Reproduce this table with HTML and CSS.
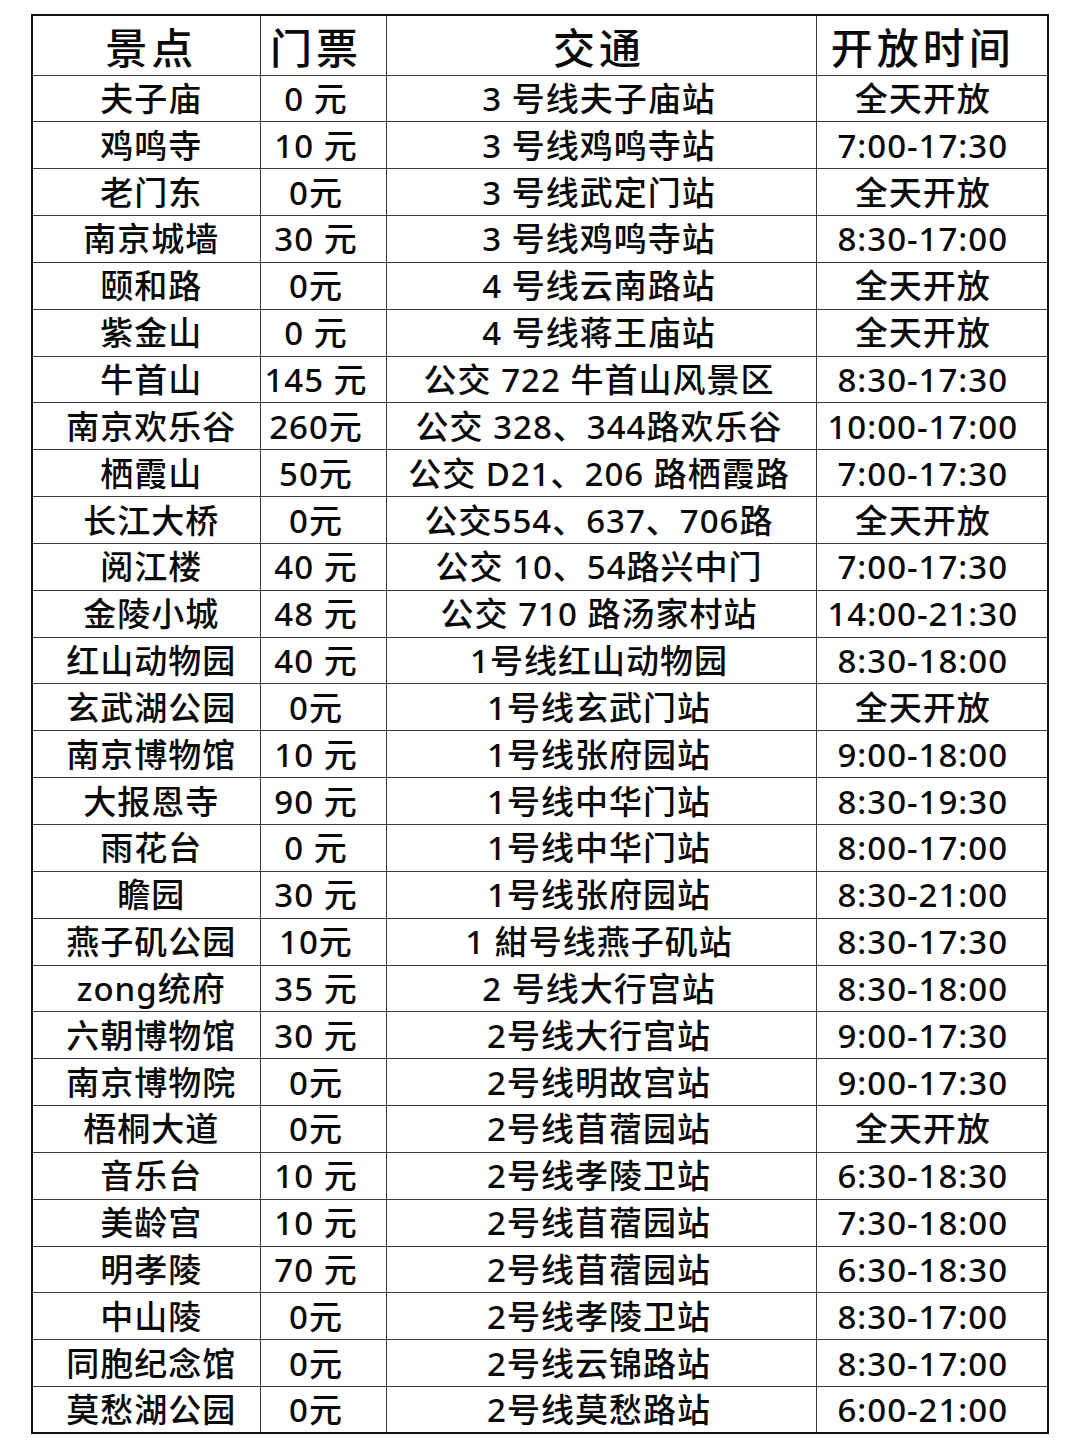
FILE: index.html
```html
<!DOCTYPE html>
<html lang="zh-CN">
<head>
<meta charset="utf-8">
<title>南京景点</title>
<link rel="stylesheet" href="styles.css">
</head>
<body>
<table class="sheet">
  <colgroup>
    <col class="c-name"><col class="c-price"><col class="c-trans"><col class="c-time">
  </colgroup>
  <thead>
    <tr class="head"><th class="n">景点</th><th class="p">门票</th><th class="t">交通</th><th class="h">开放时间</th></tr>
  </thead>
  <tbody>
    <tr><td class="n">夫子庙</td><td class="p">0 元</td><td class="t">3 号线夫子庙站</td><td class="h">全天开放</td></tr>
    <tr><td class="n">鸡鸣寺</td><td class="p">10 元</td><td class="t">3 号线鸡鸣寺站</td><td class="h">7:00-17:30</td></tr>
    <tr><td class="n">老门东</td><td class="p">0元</td><td class="t">3 号线武定门站</td><td class="h">全天开放</td></tr>
    <tr><td class="n">南京城墙</td><td class="p">30 元</td><td class="t">3 号线鸡鸣寺站</td><td class="h">8:30-17:00</td></tr>
    <tr><td class="n">颐和路</td><td class="p">0元</td><td class="t">4 号线云南路站</td><td class="h">全天开放</td></tr>
    <tr><td class="n">紫金山</td><td class="p">0 元</td><td class="t">4 号线蒋王庙站</td><td class="h">全天开放</td></tr>
    <tr><td class="n">牛首山</td><td class="p">145 元</td><td class="t">公交 722 牛首山风景区</td><td class="h">8:30-17:30</td></tr>
    <tr><td class="n">南京欢乐谷</td><td class="p">260元</td><td class="t">公交 328、344路欢乐谷</td><td class="h">10:00-17:00</td></tr>
    <tr><td class="n">栖霞山</td><td class="p">50元</td><td class="t">公交 D21、206 路栖霞路</td><td class="h">7:00-17:30</td></tr>
    <tr><td class="n">长江大桥</td><td class="p">0元</td><td class="t">公交554、637、706路</td><td class="h">全天开放</td></tr>
    <tr><td class="n">阅江楼</td><td class="p">40 元</td><td class="t">公交 10、54路兴中门</td><td class="h">7:00-17:30</td></tr>
    <tr><td class="n">金陵小城</td><td class="p">48 元</td><td class="t">公交 710 路汤家村站</td><td class="h">14:00-21:30</td></tr>
    <tr><td class="n">红山动物园</td><td class="p">40 元</td><td class="t">1号线红山动物园</td><td class="h">8:30-18:00</td></tr>
    <tr><td class="n">玄武湖公园</td><td class="p">0元</td><td class="t">1号线玄武门站</td><td class="h">全天开放</td></tr>
    <tr><td class="n">南京博物馆</td><td class="p">10 元</td><td class="t">1号线张府园站</td><td class="h">9:00-18:00</td></tr>
    <tr><td class="n">大报恩寺</td><td class="p">90 元</td><td class="t">1号线中华门站</td><td class="h">8:30-19:30</td></tr>
    <tr><td class="n">雨花台</td><td class="p">0 元</td><td class="t">1号线中华门站</td><td class="h">8:00-17:00</td></tr>
    <tr><td class="n">瞻园</td><td class="p">30 元</td><td class="t">1号线张府园站</td><td class="h">8:30-21:00</td></tr>
    <tr><td class="n">燕子矶公园</td><td class="p">10元</td><td class="t">1 紺号线燕子矶站</td><td class="h">8:30-17:30</td></tr>
    <tr><td class="n">zong统府</td><td class="p">35 元</td><td class="t">2 号线大行宫站</td><td class="h">8:30-18:00</td></tr>
    <tr><td class="n">六朝博物馆</td><td class="p">30 元</td><td class="t">2号线大行宫站</td><td class="h">9:00-17:30</td></tr>
    <tr><td class="n">南京博物院</td><td class="p">0元</td><td class="t">2号线明故宫站</td><td class="h">9:00-17:30</td></tr>
    <tr><td class="n">梧桐大道</td><td class="p">0元</td><td class="t">2号线苜蓿园站</td><td class="h">全天开放</td></tr>
    <tr><td class="n">音乐台</td><td class="p">10 元</td><td class="t">2号线孝陵卫站</td><td class="h">6:30-18:30</td></tr>
    <tr><td class="n">美龄宫</td><td class="p">10 元</td><td class="t">2号线苜蓿园站</td><td class="h">7:30-18:00</td></tr>
    <tr><td class="n">明孝陵</td><td class="p">70 元</td><td class="t">2号线苜蓿园站</td><td class="h">6:30-18:30</td></tr>
    <tr><td class="n">中山陵</td><td class="p">0元</td><td class="t">2号线孝陵卫站</td><td class="h">8:30-17:00</td></tr>
    <tr><td class="n">同胞纪念馆</td><td class="p">0元</td><td class="t">2号线云锦路站</td><td class="h">8:30-17:00</td></tr>
    <tr><td class="n">莫愁湖公园</td><td class="p">0元</td><td class="t">2号线莫愁路站</td><td class="h">6:00-21:00</td></tr>
  </tbody>
</table>
</body>
</html>
```

FILE: styles.css
```css
html, body {
  margin: 0;
  padding: 0;
  background: #ffffff;
}

body {
  padding: 14px 0 0 31px;
  font-family: "Noto Sans", "Noto Sans CJK SC", sans-serif;
  color: #0a0a0a;
}

.sheet {
  border-collapse: collapse;
  table-layout: fixed;
  width: 1016px;
  border: 2px solid #111111;
}

.c-name { width: 228px; }
.c-price { width: 126px; }
.c-trans { width: 430px; }
.c-time { width: 232px; }

.sheet th,
.sheet td {
  border: 1px solid #3a3a3a;
  padding: 0;
  text-align: center;
  vertical-align: middle;
  white-space: nowrap;
  line-height: 1;
  overflow: hidden;
  font-weight: 500;
}

.sheet th {
  font-size: 42px;
  letter-spacing: 4px;
  padding-top: 5px;
}

.sheet td {
  font-size: 33px;
  letter-spacing: 1px;
}

.sheet thead tr {
  height: 60px;
}

.sheet tbody tr {
  height: 46.85px;
}

.sheet .n { padding-left: 10px; }
.sheet .p { padding-right: 14px; }
.sheet .t { padding-right: 4px; }
.sheet .h { padding-right: 18px; }
```
